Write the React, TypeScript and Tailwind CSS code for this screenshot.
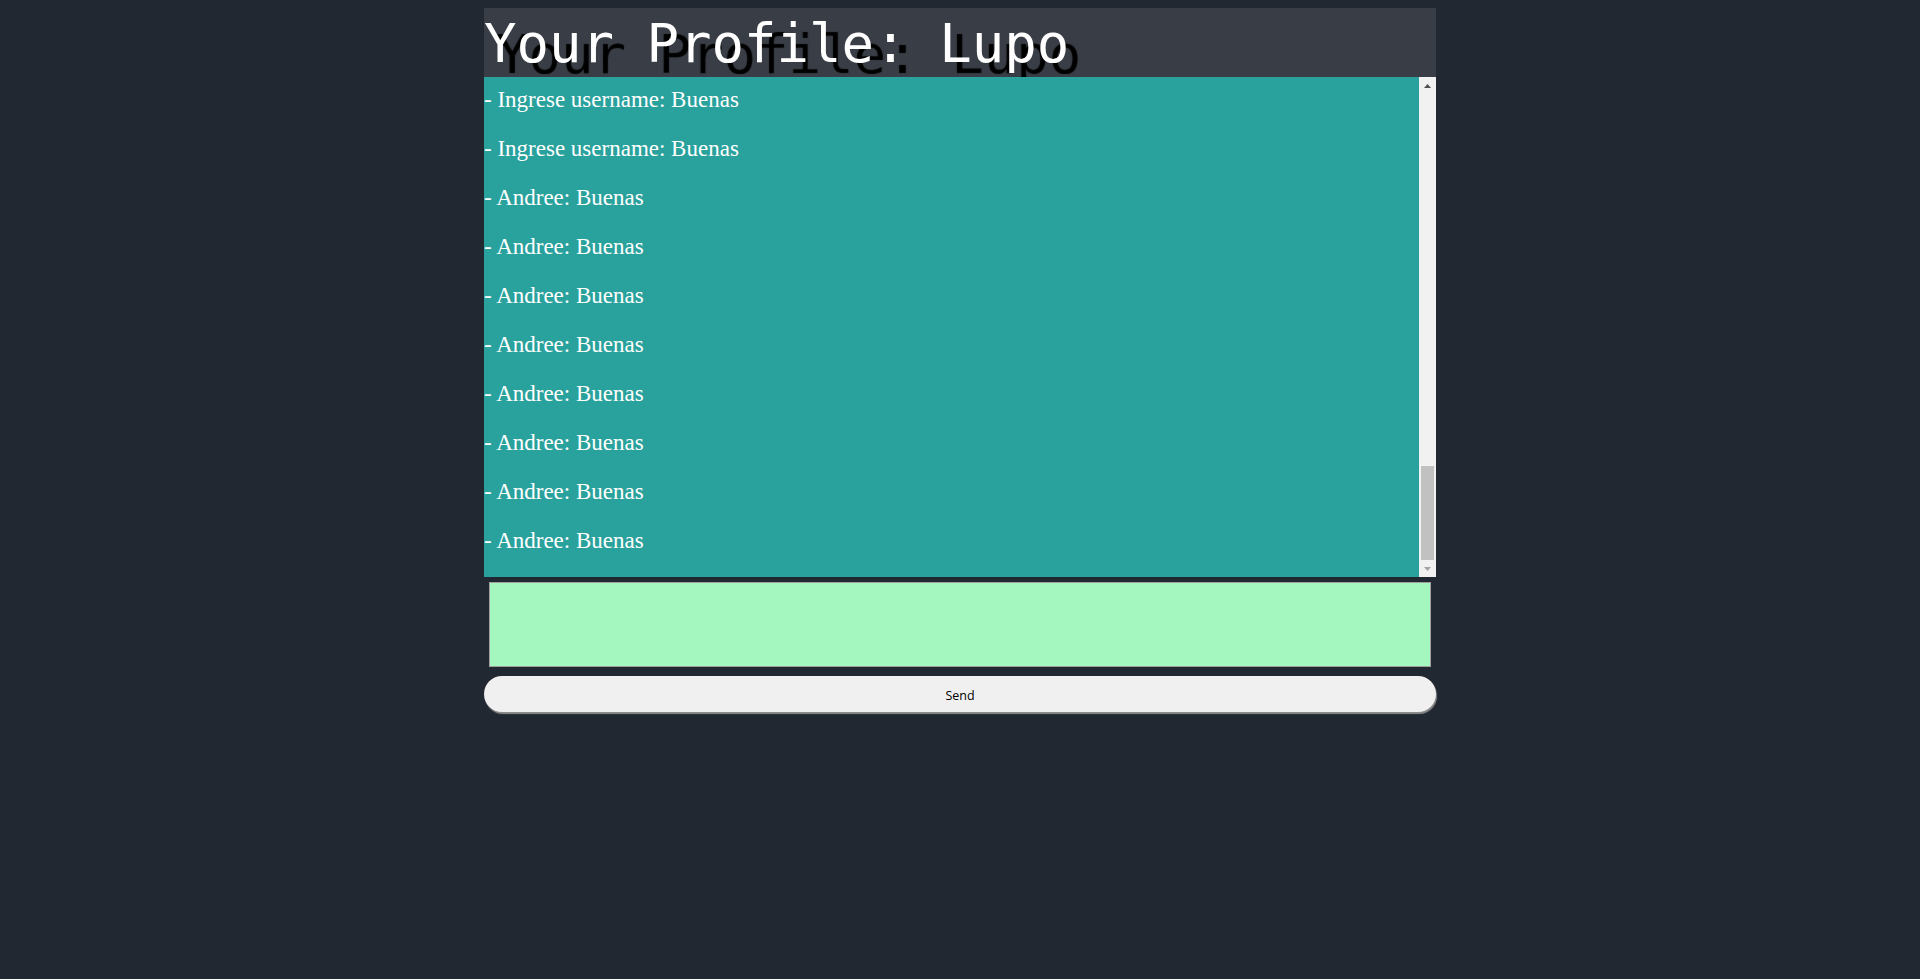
import React from "react";

const earlier: string[] = [
  ...Array.from({ length: 20 }, () => "Andree: Hola"),
  ...Array.from({ length: 20 }, () => "Ingrese username: Hola"),
];

const visible: string[] = [
  "Ingrese username: Buenas",
  "Ingrese username: Buenas",
  "Andree: Buenas",
  "Andree: Buenas",
  "Andree: Buenas",
  "Andree: Buenas",
  "Andree: Buenas",
  "Andree: Buenas",
  "Andree: Buenas",
  "Andree: Buenas",
];

export default function App() {
  const messages = [...earlier, ...visible];
  return (
    <div className="min-h-[979px] w-full bg-[#222831] pt-[8px]">
      <div className="mx-auto flex w-[952px] flex-col">
        <header className="h-[69px] overflow-hidden bg-[#393e46]">
          <h1 className="whitespace-nowrap pt-[9px] font-['DejaVu_Sans_Mono',monospace] text-[54px] leading-[54px] text-white [text-shadow:12px_11px_1px_#000]">
            Your Profile: Lupo
          </h1>
        </header>
        <div className="flex h-[500px] bg-[#29a19c]">
          <div className="flex flex-1 flex-col justify-end gap-[23px] overflow-hidden pb-[23px] font-['Liberation_Serif',serif] text-[23px] leading-[26px] text-white">
            {messages.map((m, i) => (
              <p key={i} className="whitespace-nowrap">
                - {m}
              </p>
            ))}
          </div>
          <div className="flex w-[17px] flex-col bg-[#f1f1f1]">
            <div className="flex h-[17px] items-center justify-center">
              <svg width="7" height="4" viewBox="0 0 7 4">
                <path d="M3.5 0L7 4H0z" fill="#505050" />
              </svg>
            </div>
            <div className="flex flex-1 flex-col justify-end">
              <div className="mx-[2px] h-[94px] bg-[#c1c1c1]" />
            </div>
            <div className="flex h-[17px] items-center justify-center">
              <svg width="7" height="4" viewBox="0 0 7 4">
                <path d="M0 0H7L3.5 4z" fill="#a3a3a3" />
              </svg>
            </div>
          </div>
        </div>
        <textarea className="mx-[5px] mt-[5px] block h-[85px] resize-none border border-[#a0a0a0] bg-[#a3f7bf] outline-none" />
        <button className="mt-[9px] h-[36px] w-full rounded-full bg-[#f0f0f0] pt-[4px] font-['Open_Sans','Noto_Sans',sans-serif] text-[12.5px] text-black shadow-[1px_2px_1px_#8c8c8c]">
          Send
        </button>
      </div>
    </div>
  );
}
